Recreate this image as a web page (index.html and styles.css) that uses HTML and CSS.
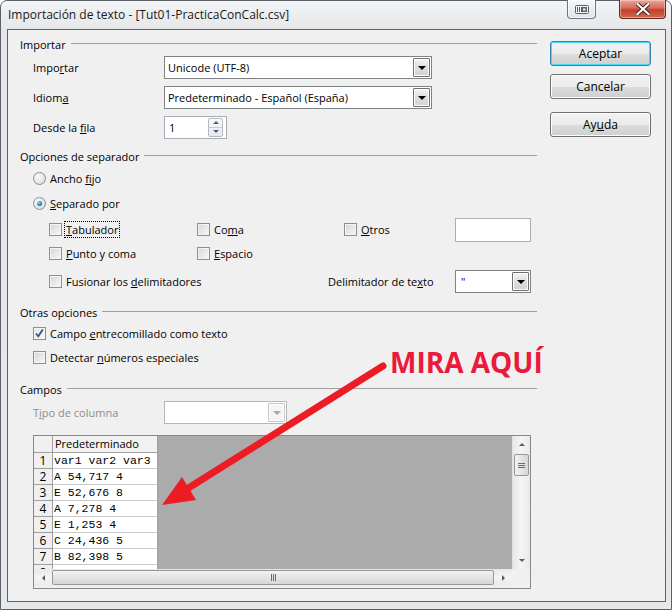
FILE: index.html
```html
<!DOCTYPE html>
<html lang="es">
<head>
<meta charset="utf-8">
<title>Importación de texto</title>
<link rel="stylesheet" href="styles.css">
</head>
<body>
<div class="window">
  <div class="titlebar">
    <span class="title">Importación de texto - [Tut01-PracticaConCalc.csv]</span>
    <div class="cap-btn cap-toggle">
      <svg width="14" height="9" viewBox="0 0 14 9"><rect x="0.5" y="0.5" width="13" height="8" rx="1" fill="#f4f4f4" stroke="#5a5f66"/><rect x="2" y="2" width="1" height="5" fill="#5a5f66"/><rect x="4" y="2" width="1" height="5" fill="#5a5f66"/><rect x="6" y="2" width="6" height="5" fill="#5a5f66"/><rect x="8" y="3.5" width="2.5" height="2" fill="#f4f4f4"/></svg>
    </div>
    <div class="cap-btn cap-close">
      <svg width="14" height="12" viewBox="0 0 14 12"><path d="M1.5 1 L12.5 11 M12.5 1 L1.5 11" stroke="#3a1a16" stroke-width="4" stroke-linecap="square"/><path d="M1.5 1 L12.5 11 M12.5 1 L1.5 11" stroke="#ffffff" stroke-width="2.2" stroke-linecap="square"/></svg>
    </div>
  </div>

  <div class="client">
    <div class="main">
      <div class="group-head gh-import"><span>Importar</span></div>
      <div class="field-row fr-import">
        <span class="field-label">Impo<u>r</u>tar</span>
        <div class="combo combo-wide"><span class="combo-text">Unicode (UTF-8)</span><span class="combo-btn"><i class="tri"></i></span></div>
      </div>
      <div class="field-row fr-next">
        <span class="field-label">Idiom<u>a</u></span>
        <div class="combo combo-wide"><span class="combo-text">Predeterminado - Español (España)</span><span class="combo-btn"><i class="tri"></i></span></div>
      </div>
      <div class="field-row fr-next">
        <span class="field-label">Desde la <u>f</u>ila</span>
        <div class="spin"><span class="spin-text">1</span><span class="spin-btns"><i class="spin-up"></i><i class="spin-down"></i></span></div>
      </div>

      <div class="group-head gh-sep"><span>Opciones de separador</span></div>
      <div class="opt-row or-ancho"><span class="radio"></span><span class="opt-text">Ancho <u>f</u>ijo</span></div>
      <div class="opt-row or-separado"><span class="radio radio-on"></span><span class="opt-text"><u>S</u>eparado por</span></div>

      <div class="cb-grid cg-1">
        <div class="cb-item"><span class="check"></span><span class="opt-text focus"><u>T</u>abulador</span></div>
        <div class="cb-item"><span class="check"></span><span class="opt-text">Co<u>m</u>a</span></div>
        <div class="cb-item"><span class="check"></span><span class="opt-text"><u>O</u>tros</span></div>
        <div class="textbox"></div>
      </div>
      <div class="cb-grid cg-2">
        <div class="cb-item"><span class="check"></span><span class="opt-text"><u>P</u>unto y coma</span></div>
        <div class="cb-item"><span class="check"></span><span class="opt-text"><u>E</u>spacio</span></div>
      </div>
      <div class="cb-row3">
        <div class="cb-item cb-fusion"><span class="check"></span><span class="opt-text">Fusionar los <u>d</u>elimitadores</span></div>
        <span class="delim-label">Delimitador de te<u>x</u>to</span>
        <div class="combo combo-small"><span class="combo-text">"</span><span class="combo-btn"><i class="tri"></i></span></div>
      </div>

      <div class="group-head gh-otras"><span>Otras opciones</span></div>
      <div class="opt-row or-campo"><span class="check check-on"><svg width="11" height="11" viewBox="0 0 11 11"><path d="M2 5.5 L4.3 8.3 L8.8 1.6" fill="none" stroke="#34538a" stroke-width="1.8"/></svg></span><span class="opt-text">Campo <u>e</u>ntrecomillado como texto</span></div>
      <div class="opt-row or-detectar"><span class="check"></span><span class="opt-text">Detectar <u>n</u>úmeros especiales</span></div>

      <div class="group-head gh-campos"><span>Campos</span></div>
      <div class="field-row fr-tipo">
        <span class="field-label disabled">T<u>i</u>po de columna</span>
        <div class="combo combo-tipo combo-disabled"><span class="combo-text"></span><span class="combo-btn"><i class="tri"></i></span></div>
      </div>

      <div class="preview">
        <div class="pv-body">
          <div class="pv-table">
            <div class="pv-row pv-head"><div class="pv-num"></div><div class="pv-cell">Predeterminado</div></div>
            <div class="pv-row"><div class="pv-num">1</div><div class="pv-cell mono">var1 var2 var3</div></div>
            <div class="pv-row"><div class="pv-num">2</div><div class="pv-cell mono">A 54,717 4</div></div>
            <div class="pv-row"><div class="pv-num">3</div><div class="pv-cell mono">E 52,676 8</div></div>
            <div class="pv-row"><div class="pv-num">4</div><div class="pv-cell mono">A 7,278 4</div></div>
            <div class="pv-row"><div class="pv-num">5</div><div class="pv-cell mono">E 1,253 4</div></div>
            <div class="pv-row"><div class="pv-num">6</div><div class="pv-cell mono">C 24,436 5</div></div>
            <div class="pv-row"><div class="pv-num">7</div><div class="pv-cell mono">B 82,398 5</div></div>
            <div class="pv-row"><div class="pv-num">8</div><div class="pv-cell mono">E 64,444 6</div></div>
          </div>
          <div class="vscroll">
            <span class="sb-arrow"><i class="tri-up"></i></span>
            <span class="vthumb"><i></i><i></i><i></i></span>
            <span class="vtrack"></span>
            <span class="sb-arrow"><i class="tri-down"></i></span>
          </div>
        </div>
        <div class="hs-row">
          <div class="hscroll">
            <span class="sb-arrow-h"><i class="tri-left"></i></span>
            <span class="hthumb"><i></i><i></i><i></i></span>
            <span class="sb-arrow-h"><i class="tri-right"></i></span>
          </div>
          <div class="sb-corner"></div>
        </div>
      </div>
    </div>

    <div class="side">
      <div class="btn btn-default">Aceptar</div>
      <div class="btn btn-cancel">Cancelar</div>
      <div class="btn btn-help">Ay<u>u</u>da</div>
    </div>
  </div>

  <svg class="annot-arrow" width="672" height="610" viewBox="0 0 672 610">
    <line x1="383" y1="366" x2="182" y2="492" stroke="#ed1c24" stroke-width="7" stroke-linecap="round"/>
    <polygon points="162,505 182,477 196,500" fill="#ed1c24"/>
  </svg>
  <div class="annot-text">MIRA AQUÍ</div>
</div>
</body>
</html>
```

FILE: styles.css
```css
* { box-sizing: border-box; }
html, body { margin: 0; padding: 0; }
body {
  width: 672px;
  height: 610px;
  overflow: hidden;
  background: #ffffff;
  font-family: "Open Sans", "Noto Sans", sans-serif;
  font-size: 11px;
  color: #000;
}
u { text-decoration: underline; text-underline-offset: 1px; }

.window {
  position: relative;
  width: 672px;
  height: 610px;
  border: 1px solid #5b6068;
  border-radius: 7px 7px 0 0;
  background: linear-gradient(#f3f4f5 0, #e4e6e8 30px, #e6e7e9 100%);
  padding: 0 5px 7px 6px;
  display: flex;
  flex-direction: column;
}

/* title bar */
.titlebar {
  height: 28px;
  display: flex;
  align-items: flex-start;
}
.title {
  margin-top: 6px;
  padding-left: 1px;
  line-height: 16px;
  font-size: 12px;
  color: #1a1a1a;
}
.cap-btn {
  height: 19px;
  margin-top: -1px;
  display: flex;
  align-items: center;
  justify-content: center;
  border: 1px solid #6f747c;
  border-top: none;
  border-radius: 0 0 4px 4px;
}
.cap-toggle {
  width: 29px;
  margin-left: auto;
  background: linear-gradient(#f6f7f8, #dfe2e6);
  box-shadow: inset 0 0 0 1px rgba(255,255,255,0.7);
}
.cap-close {
  width: 47px;
  margin-left: 23px;
  border-color: #5e2b24;
  background: linear-gradient(#e9a89c 0, #d46a56 45%, #c3402a 55%, #d5664d 100%);
  box-shadow: inset 0 0 0 1px rgba(255,220,210,0.5);
}

/* client area */
.client {
  flex: 1;
  border: 1px solid #5f6266;
  background: #f0f0f0;
  display: flex;
  padding-left: 12px;
}
.main {
  width: 517px;
  display: flex;
  flex-direction: column;
}
.side {
  margin-left: 13px;
  width: 101px;
  display: flex;
  flex-direction: column;
}

/* group headers */
.group-head {
  height: 16px;
  display: flex;
  align-items: center;
  white-space: nowrap;
}
.group-head::after {
  content: "";
  flex: 1;
  height: 1px;
  margin-left: 5px;
  margin-top: -1px;
  background: #a0a0a0;
}
.gh-import { margin-top: 6px; }
.gh-sep { margin-top: 9px; }
.gh-otras { margin-top: 11px; }
.gh-campos { margin-top: 16px; }

/* label + control rows */
.field-row {
  height: 24px;
  display: flex;
  align-items: center;
  padding-left: 13px;
}
.fr-import { margin-top: 3px; }
.fr-next { margin-top: 6px; }
.fr-tipo { margin-top: 3px; }
.field-label { width: 131px; white-space: nowrap; }
.disabled { color: #8d8d8d; }

.combo {
  height: 23px;
  border: 1px solid #7f8388;
  background: #fff;
  display: flex;
  align-items: center;
  padding: 1px 1px 1px 3px;
}
.combo-wide { width: 268px; }
.combo-tipo { width: 123px; }
.combo-small { width: 76px; }
.combo-text { flex: 1; white-space: nowrap; overflow: hidden; }
.combo-btn {
  width: 17px;
  height: 19px;
  border: 1px solid #707070;
  border-radius: 1px;
  background: linear-gradient(#f4f4f4, #dedede 50%, #d2d2d2);
  box-shadow: inset 0 0 0 1px #fdfdfd;
  display: flex;
  align-items: center;
  justify-content: center;
}
.tri {
  width: 0;
  height: 0;
  border-left: 4px solid transparent;
  border-right: 4px solid transparent;
  border-top: 4px solid #000;
  margin-top: 1px;
}
.combo-disabled { border-color: #b4b8bc; }
.combo-disabled .combo-btn { border-color: #c6c8ca; background: #f4f4f4; }
.combo-disabled .tri { border-top-color: #a8a8a8; }

.spin {
  width: 63px;
  height: 23px;
  border: 1px solid #a9adb3;
  background: #fff;
  display: flex;
  align-items: center;
  padding: 1px 3px 1px 4px;
}
.spin-text { flex: 1; }
.spin-btns {
  width: 15px;
  height: 19px;
  display: flex;
  flex-direction: column;
  border: 1px solid #b7bbc1;
  border-radius: 2px;
  background: linear-gradient(#f7f8fa, #e8eaee);
}
.spin-btns i {
  flex: 1;
  display: flex;
  align-items: center;
  justify-content: center;
}
.spin-up { border-bottom: 1px solid #c8ccd2; }
.spin-up::after {
  content: "";
  border-left: 3px solid transparent;
  border-right: 3px solid transparent;
  border-bottom: 3px solid #4b5f80;
}
.spin-down::after {
  content: "";
  border-left: 3px solid transparent;
  border-right: 3px solid transparent;
  border-top: 3px solid #4b5f80;
}

/* radio & check rows */
.opt-row {
  height: 16px;
  display: flex;
  align-items: center;
  padding-left: 13px;
}
.or-ancho { margin-top: 6px; }
.or-separado { margin-top: 9px; }
.or-campo { margin-top: 5px; }
.or-detectar { margin-top: 8px; }
.opt-text { margin-left: 4px; white-space: nowrap; }

.radio {
  width: 13px;
  height: 13px;
  border-radius: 50%;
  border: 1px solid #8d8e8f;
  background: radial-gradient(circle at 35% 35%, #fafafa 0, #e4e4e4 60%, #cfcfcf 100%);
  display: flex;
  align-items: center;
  justify-content: center;
}
.radio-on::after {
  content: "";
  width: 5px;
  height: 5px;
  border-radius: 50%;
  background: radial-gradient(circle at 35% 35%, #8fd3ff 0, #2a8ad0 50%, #0e4f8e 100%);
}

.check {
  width: 13px;
  height: 13px;
  border: 1px solid #8f8f8f;
  background: linear-gradient(135deg, #d6d6d6, #f8f8f8);
  box-shadow: inset 0 0 0 1px #f4f4f4;
  display: flex;
  align-items: center;
  justify-content: center;
}
.check-on { background: linear-gradient(135deg, #e3e3e3, #fbfbfb); }

.cb-grid {
  height: 24px;
  display: grid;
  grid-template-columns: 148px 147px 111px 76px;
  align-items: center;
  padding-left: 29px;
}
.cg-1 { margin-top: 5px; }
.cg-2 { margin-top: 1px; }
.cb-item { display: flex; align-items: center; }
.focus { outline: 1px dotted #000; outline-offset: 0; padding: 0 1px; margin-left: 3px; }
.textbox {
  height: 24px;
  border: 1px solid #abadb3;
  background: #fff;
  margin-top: 2px;
}
.cb-row3 {
  height: 24px;
  margin-top: 4px;
  display: flex;
  align-items: center;
  padding-left: 29px;
}
.cb-fusion { width: 279px; }
.delim-label { width: 127px; white-space: nowrap; }
.combo-small .combo-text { padding-left: 2px; }

/* preview */
.preview {
  margin-top: 11px;
  margin-left: 13px;
  width: 498px;
  height: 154px;
  border: 1px solid #828790;
  background: #f0f0f0;
  display: flex;
  flex-direction: column;
}
.pv-body { height: 133px; display: flex; }
.pv-table {
  flex: 1;
  background: #ababab;
  overflow: hidden;
}
.pv-row { display: flex; height: 16px; }
.pv-head { height: 17px; }
.pv-num {
  width: 19px;
  background: #f0f0f0;
  border-right: 1px solid #a0a0a0;
  border-bottom: 1px solid #a0a0a0;
  text-align: center;
  font-size: 12px;
  line-height: 15px;
}
.pv-cell {
  width: 105px;
  background: #fff;
  border-right: 1px solid #a0a0a0;
  border-bottom: 1px solid #c8c8c8;
  padding-left: 1px;
  line-height: 15px;
  white-space: nowrap;
  overflow: hidden;
}
.pv-head .pv-cell {
  background: #f2f2f2;
  border-bottom-color: #a0a0a0;
  padding-left: 2px;
  line-height: 16px;
}
.pv-head .pv-num { border-bottom-color: #a0a0a0; }
.mono {
  font-family: "Liberation Mono", "DejaVu Sans Mono", monospace;
  font-size: 11.5px;
}

.vscroll {
  width: 18px;
  display: flex;
  flex-direction: column;
  background: linear-gradient(90deg, #e8e8e8, #f4f4f4 50%, #eaeaea);
  border-left: 1px solid #e0e0e0;
}
.sb-arrow {
  height: 17px;
  display: flex;
  align-items: center;
  justify-content: center;
}
.tri-up { border-left: 3px solid transparent; border-right: 3px solid transparent; border-bottom: 3px solid #5a5a5a; }
.tri-down { border-left: 3px solid transparent; border-right: 3px solid transparent; border-top: 3px solid #5a5a5a; }
.vthumb {
  height: 22px;
  margin: 1px 1px 0 1px;
  border: 1px solid #979797;
  border-radius: 2px;
  background: linear-gradient(90deg, #f2f2f2, #e4e4e4 50%, #d6d6d6);
  display: flex;
  flex-direction: column;
  align-items: center;
  justify-content: center;
  gap: 1px;
}
.vthumb i { width: 7px; height: 1px; background: #6b6b6b; }
.vtrack { flex: 1; }

.hs-row { height: 17px; display: flex; }
.hscroll {
  flex: 1;
  display: flex;
  background: linear-gradient(#e8e8e8, #f4f4f4 50%, #eaeaea);
}
.sb-arrow-h {
  width: 18px;
  display: flex;
  align-items: center;
  justify-content: center;
}
.tri-left { border-top: 3px solid transparent; border-bottom: 3px solid transparent; border-right: 3px solid #5a5a5a; }
.tri-right { border-top: 3px solid transparent; border-bottom: 3px solid transparent; border-left: 3px solid #5a5a5a; }
.hthumb {
  flex: 1;
  margin: 1px 0;
  border: 1px solid #979797;
  border-radius: 2px;
  background: linear-gradient(#f2f2f2, #e4e4e4 50%, #d6d6d6);
  display: flex;
  align-items: center;
  justify-content: center;
  gap: 1px;
}
.hthumb i { width: 1px; height: 7px; background: #6b6b6b; }
.sb-corner { width: 18px; background: #f0f0f0; }

/* buttons */
.btn {
  height: 25px;
  border: 1px solid #707070;
  border-radius: 3px;
  background: linear-gradient(#f2f2f2 0, #ebebeb 50%, #dddddd 51%, #cfcfcf 100%);
  box-shadow: inset 0 0 0 1px #fcfcfc;
  display: flex;
  align-items: center;
  justify-content: center;
  font-size: 12px;
  padding-bottom: 1px;
}
.btn-default {
  margin-top: 11px;
  border-color: #3c7fb1;
  box-shadow: inset 0 0 0 1px #48d8fb;
}
.btn-cancel { margin-top: 8px; }
.btn-help { margin-top: 13px; }

/* annotation overlay */
.annot-arrow {
  position: absolute;
  left: -1px;
  top: -1px;
  pointer-events: none;
}
.annot-text {
  position: absolute;
  left: 389px;
  top: 347px;
  font-family: "Open Sans", sans-serif;
  font-weight: 700;
  font-size: 28px;
  line-height: 28px;
  color: #ea1a3a;
  white-space: nowrap;
}
```
